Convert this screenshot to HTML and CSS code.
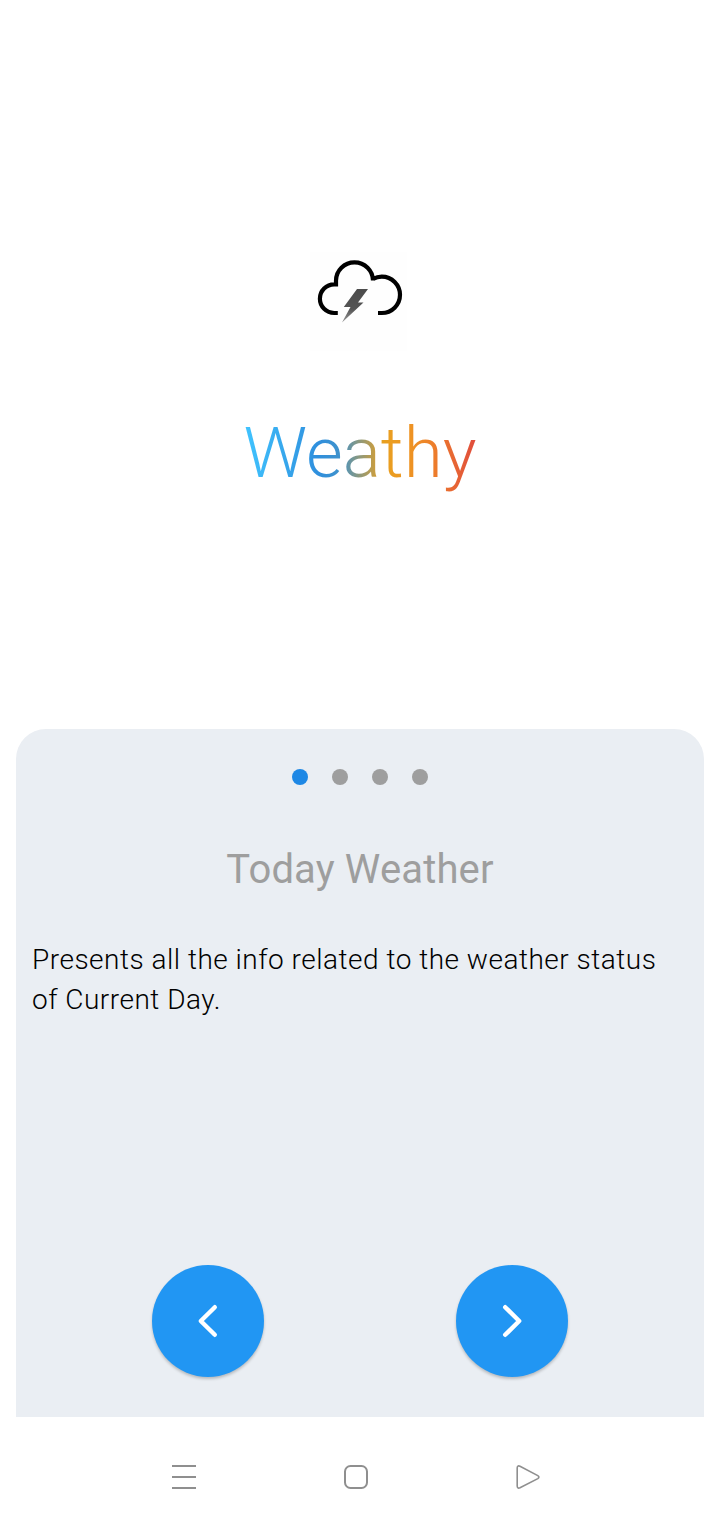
FILE: index.html
```html
<!DOCTYPE html>
<html lang="en">
<head>
<meta charset="utf-8">
<title>Weathy</title>
<link rel="stylesheet" href="styles.css">
</head>
<body>
<main class="screen">
  <header class="brand">
    <svg class="logo" viewBox="0 0 120 120" aria-hidden="true">
      <defs>
        <linearGradient id="bolt-fill" x1="0" y1="0" x2="0" y2="1">
          <stop offset="0" stop-color="#4c4c4c"/>
          <stop offset=".6" stop-color="#555"/>
          <stop offset="1" stop-color="#999"/>
        </linearGradient>
      </defs>
      <path class="logo-bg" d="M10 12h97v99H10z"/>
      <path class="cloud" d="M37.8 73H34.2A14.3 14.3 0 0 1 34.2 44.4H36V40.6A18.5 18.3 0 0 1 73 40.6V39A18.3 18.3 0 0 1 81.8 36.6A18.2 18.2 0 0 1 81.8 73H78"/>
      <path class="bolt" fill="url(#bolt-fill)" d="M57 49H68L58 62.5H63.5L42 82.5L50.5 67H43.8Z"/>
    </svg>
    <h1 class="name">Weathy</h1>
  </header>
  <section class="card">
    <div class="dots"><span class="dot active"></span><span class="dot"></span><span class="dot"></span><span class="dot"></span></div>
    <h2 class="title">Today Weather</h2>
    <p class="description">Presents all the info related to the weather status of Current Day.</p>
    <div class="actions">
      <button class="round" aria-label="Previous"><svg viewBox="0 0 112 112"><path d="M62.8 42.2L48.8 56L62.8 69.8"/></svg></button>
      <button class="round" aria-label="Next"><svg viewBox="0 0 112 112"><path d="M49.2 42.2L63.2 56L49.2 69.8"/></svg></button>
    </div>
  </section>
  <nav class="system">
    <svg viewBox="0 0 28 28"><path d="M2 3H26M2 14H26M2 25H26"/></svg>
    <svg viewBox="0 0 28 28"><rect x="3" y="3" width="22" height="22" rx="5.5"/></svg>
    <svg viewBox="0 0 28 28"><path class="thin" d="M3.2 5V23Q3.2 26 6 24.8L23.8 15.6Q26 14 23.8 12.6L6 3.2Q3.2 2 3.2 5Z"/></svg>
  </nav>
</main>
</body>
</html>
```
FILE: styles.css
```css
* { box-sizing: border-box; }
body {
  margin: 0;
  background: #fff;
  font-family: Roboto, "Liberation Sans", sans-serif;
}
.screen {
  display: flex;
  flex-direction: column;
  width: 720px;
  height: 1521px;
}
.brand {
  display: flex;
  flex-direction: column;
  align-items: center;
  height: 729px;
  padding-top: 240px;
}
.logo { width: 120px; height: 120px; }
.logo-bg { fill: #fefefe; }
.cloud { fill: none; stroke: #000; stroke-width: 4.2; filter: blur(.6px); }
.bolt { filter: blur(.6px); }
.name {
  margin: 51px 0 0;
  font-size: 71px;
  font-weight: 300;
  line-height: 84px;
  color: transparent;
  background: linear-gradient(90deg, #40c4ff 0%, #2f8fdd 32%, #3f92cc 41%, #e8a020 60%, #ee9722 70%, #ed7d2b 82%, #e04c3c 100%);
  -webkit-background-clip: text;
  background-clip: text;
}
.card {
  display: flex;
  flex-direction: column;
  height: 688px;
  margin: 0 16px;
  padding: 40px 16px;
  border-radius: 30px 30px 0 0;
  background: #eaeef3;
}
.dots { display: flex; justify-content: center; gap: 24px; }
.dot { width: 16px; height: 16px; border-radius: 50%; background: #9e9e9e; }
.dot.active { background: #1e88e5; }
.title {
  margin: 61px 0 0;
  font-size: 40px;
  font-weight: 400;
  line-height: 48px;
  letter-spacing: .15px;
  text-align: center;
  color: #9e9e9e;
}
.description {
  margin: 46px 0 0;
  font-size: 28px;
  font-weight: 300;
  line-height: 40px;
  letter-spacing: .5px;
  color: #000;
}
.actions { display: flex; justify-content: space-around; margin-top: auto; padding: 0 24px; }
.round {
  width: 112px;
  height: 112px;
  padding: 0;
  border: 0;
  border-radius: 50%;
  background: #2196f3;
  box-shadow: 0 2px 3px rgba(0, 0, 0, .22);
}
.round svg { display: block; width: 112px; height: 112px; }
.round path { fill: none; stroke: #fff; stroke-width: 4.4; stroke-linecap: round; stroke-linejoin: round; }
.system {
  display: flex;
  flex: 1;
  align-items: center;
  justify-content: center;
  gap: 144px;
  padding: 16px 8px 0 0;
}
.system svg { width: 28px; height: 28px; fill: none; stroke: #8f8f8f; stroke-width: 2; }
.system .thin { stroke-width: 1.6; }
```
